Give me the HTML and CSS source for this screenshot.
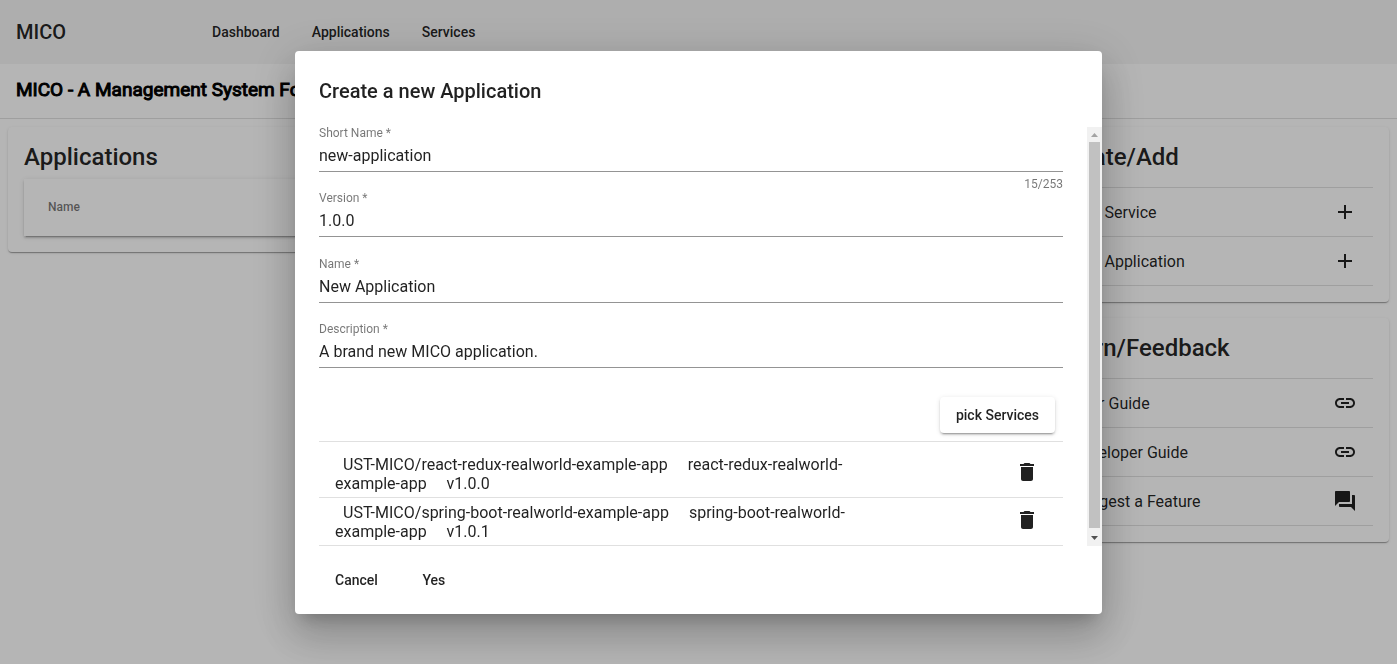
FILE: index.html
```html
<!DOCTYPE html>
<html lang="en">
<head>
  <meta charset="utf-8">
  <title>MICO</title>
  <link rel="stylesheet" href="styles.css">
</head>
<body>
  <svg class="sprite" aria-hidden="true">
    <symbol id="add" viewBox="0 0 24 24"><path d="M19 13h-6v6h-2v-6H5v-2h6V5h2v6h6v2z"/></symbol>
    <symbol id="link" viewBox="0 0 24 24"><path d="M3.900 12c0-1.710 1.390-3.100 3.100-3.100h4V7H7c-2.760 0-5 2.240-5 5s2.240 5 5 5h4v-1.900H7c-1.710 0-3.100-1.390-3.100-3.100zM8 13h8v-2H8v2zm9-6h-4v1.900h4c1.710 0 3.100 1.390 3.100 3.100s-1.390 3.100-3.100 3.100h-4V17h4c2.760 0 5-2.240 5-5s-2.240-5-5-5z"/></symbol>
    <symbol id="forum" viewBox="0 0 24 24"><path d="M21 6h-2v9H6v2c0 .55.45 1 1 1h11l4 4V7c0-.55-.45-1-1-1zm-4 6V3c0-.55-.45-1-1-1H3c-.55 0-1 .45-1 1v14l4-4h10c.55 0 1-.45 1-1z"/></symbol>
    <symbol id="delete" viewBox="0 0 24 24"><path d="M6 19c0 1.100.9 2 2 2h8c1.100 0 2-.9 2-2V7H6v12zM19 4h-3.500l-1-1h-5l-1 1H5v2h14V4z"/></symbol>
  </svg>

  <header class="toolbar">
    <span class="brand">MICO</span>
    <nav class="nav">
      <a class="nav-link" href="#dashboard">Dashboard</a>
      <a class="nav-link" href="#applications">Applications</a>
      <a class="nav-link" href="#services">Services</a>
    </nav>
  </header>
  <h1 class="page-title">MICO - A Management System For Microservice Compositions</h1>

  <main class="board">
    <section class="card">
      <h2 class="card-title">Applications</h2>
      <table class="app-table">
        <thead><tr><th>Name</th></tr></thead>
      </table>
    </section>
    <div class="side">
      <section class="card">
        <h2 class="card-title">Create/Add</h2>
        <ul class="links">
          <li><a class="link-row" href="#new-service">Add Service <svg class="icon"><use href="#add"/></svg></a></li>
          <li><a class="link-row" href="#new-application">Add Application <svg class="icon"><use href="#add"/></svg></a></li>
        </ul>
      </section>
      <section class="card">
        <h2 class="card-title">Learn/Feedback</h2>
        <ul class="links">
          <li><a class="link-row" href="#user-guide">User Guide <svg class="icon"><use href="#link"/></svg></a></li>
          <li><a class="link-row" href="#developer-guide">Developer Guide <svg class="icon"><use href="#link"/></svg></a></li>
          <li><a class="link-row" href="#feature">Suggest a Feature <svg class="icon"><use href="#forum"/></svg></a></li>
        </ul>
      </section>
    </div>
  </main>

  <div class="backdrop">
    <form class="dialog" role="dialog" aria-labelledby="dialog-title">
      <h2 class="dialog-title" id="dialog-title">Create a new Application</h2>
      <div class="dialog-body">
        <div class="dialog-content">
          <div class="fields">
            <div class="field">
              <label for="short-name">Short Name *</label>
              <input id="short-name" type="text" value="new-application" maxlength="253">
              <span class="counter">15/253</span>
            </div>
            <div class="field">
              <label for="version">Version *</label>
              <input id="version" type="text" value="1.0.0">
            </div>
            <div class="field">
              <label for="name">Name *</label>
              <input id="name" type="text" value="New Application">
            </div>
            <div class="field">
              <label for="description">Description *</label>
              <input id="description" type="text" value="A brand new MICO application.">
            </div>
          </div>
          <div class="pick-row">
            <button class="button raised" type="button">pick Services</button>
          </div>
          <ul class="services">
            <li class="service">
              <p class="service-text"><span>UST-MICO/react-redux-realworld-example-app</span> <span>react-redux-realworld-example-app</span> <span>v1.0.0</span></p>
              <button class="icon-button" type="button" aria-label="Remove"><svg class="icon"><use href="#delete"/></svg></button>
            </li>
            <li class="service">
              <p class="service-text"><span>UST-MICO/spring-boot-realworld-example-app</span> <span>spring-boot-realworld-example-app</span> <span>v1.0.1</span></p>
              <button class="icon-button" type="button" aria-label="Remove"><svg class="icon"><use href="#delete"/></svg></button>
            </li>
          </ul>
        </div>
        <div class="scrollbar" aria-hidden="true">
          <svg class="arrow arrow-up" viewBox="0 0 15 15"><path d="M4 10h7L7.500 6z"/></svg>
          <div class="thumb"></div>
          <svg class="arrow" viewBox="0 0 15 15"><path d="M4 5h7L7.500 9z"/></svg>
        </div>
      </div>
      <div class="actions">
        <button class="button" type="button">Cancel</button>
        <button class="button" type="button">Yes</button>
      </div>
    </form>
  </div>
</body>
</html>
```
FILE: styles.css
```css
* { box-sizing: border-box; }

body {
  margin: 0;
  height: 100vh;
  overflow: hidden;
  background: #fff;
  color: rgba(0, 0, 0, .87);
  font: 400 16px/19px Roboto, sans-serif;
}

h1, h2, p, ul { margin: 0; padding: 0; }
ul { list-style: none; }
a { color: inherit; text-decoration: none; }
button, input { font: inherit; color: inherit; }

.sprite { position: absolute; width: 0; height: 0; }
.icon { width: 24px; height: 24px; fill: currentColor; flex: none; display: block; }

.toolbar {
  display: flex;
  align-items: center;
  height: 64px;
  padding: 0 16px;
  background: #f5f5f5;
}
.brand { width: 180px; font-size: 20px; font-weight: 500; }
.nav { display: flex; }
.nav-link { padding: 0 16px; font-size: 14px; font-weight: 500; line-height: 36px; }

.page-title {
  padding: 14px 16px 16px;
  border-bottom: 1px solid rgba(0, 0, 0, .12);
  color: #000;
  font-size: 19px;
  font-weight: 400;
  line-height: 24px;
  white-space: nowrap;
  -webkit-text-stroke: 1px #000;
}

.board {
  display: grid;
  grid-template-columns: minmax(0, 1fr) 349px;
  align-items: start;
  gap: 16px;
  padding: 8px;
}
.side { display: grid; gap: 16px; }
.card {
  padding: 16px;
  border-radius: 4px;
  background: #fff;
  box-shadow: 0 2px 1px -1px rgba(0, 0, 0, .2), 0 1px 1px rgba(0, 0, 0, .14), 0 1px 3px rgba(0, 0, 0, .12);
}
.card-title { font-size: 24px; font-weight: 500; line-height: 28px; }

.app-table {
  width: 100%;
  margin-top: 8px;
  border-spacing: 0;
  box-shadow: 0 3px 1px -2px rgba(0, 0, 0, .2), 0 2px 2px rgba(0, 0, 0, .14), 0 1px 5px rgba(0, 0, 0, .12);
}
.app-table th {
  height: 57px;
  padding: 0 24px;
  color: rgba(0, 0, 0, .54);
  font-size: 12px;
  font-weight: 500;
  text-align: left;
}

.links { margin-top: 16px; border-top: 1px solid rgba(0, 0, 0, .12); }
.link-row {
  display: flex;
  align-items: center;
  justify-content: space-between;
  height: 49px;
  padding: 0 16px;
  border-bottom: 1px solid rgba(0, 0, 0, .12);
}

.backdrop {
  position: fixed;
  inset: 0;
  display: flex;
  align-items: center;
  justify-content: center;
  background: rgba(0, 0, 0, .29);
}
.dialog {
  display: flex;
  flex-direction: column;
  width: 807px;
  max-width: 90vw;
  padding: 24px 0 0;
  border-radius: 4px;
  background: #fff;
  box-shadow: 0 11px 15px -7px rgba(0, 0, 0, .2), 0 24px 38px 3px rgba(0, 0, 0, .14), 0 9px 46px 8px rgba(0, 0, 0, .12);
}
.dialog-title {
  margin: 0 24px 20px;
  font-size: 20px;
  font-weight: 500;
  line-height: 32px;
}
.dialog-body {
  display: flex;
  max-height: calc(100vh - 245px);
}
.dialog-content {
  flex: 1;
  padding: 0 24px;
  overflow-y: auto;
  scrollbar-width: none;
}

.scrollbar {
  display: flex;
  flex-direction: column;
  width: 15px;
  background: #f1f1f1;
}
.arrow { display: block; height: 15px; flex: none; fill: #505050; }
.arrow-up { fill: #a3a3a3; }
.thumb { flex: 1; margin: 0 2px 3px; background: #c1c1c1; }

.fields { display: grid; grid-auto-rows: 1fr; min-height: 262px; }
.field { position: relative; }
.field label {
  display: block;
  color: rgba(0, 0, 0, .54);
  font-size: 12px;
  line-height: 12px;
}
.field input {
  display: block;
  width: 100%;
  height: 33px;
  padding: 1px 0 0;
  border: 0;
  border-bottom: 1px solid rgba(0, 0, 0, .42);
  outline: 0;
  background: none;
}
.counter {
  display: block;
  padding-top: 4px;
  color: rgba(0, 0, 0, .54);
  font-size: 12px;
  line-height: 16px;
  text-align: right;
}

.button {
  min-width: 64px;
  height: 36px;
  padding: 0 16px;
  border: 0;
  border-radius: 4px;
  background: #fff;
  font-size: 14px;
  font-weight: 500;
  line-height: 36px;
}
.raised { box-shadow: 0 3px 1px -2px rgba(0, 0, 0, .2), 0 2px 2px rgba(0, 0, 0, .14), 0 1px 5px rgba(0, 0, 0, .12); }
.pick-row { display: flex; justify-content: flex-end; padding: 8px; }

.services { padding-top: 8px; border-top: 1px solid rgba(0, 0, 0, .12); }
.service {
  display: flex;
  align-items: flex-start;
  justify-content: space-between;
  height: 48px;
  padding: 2px 16px 0;
  border-bottom: 1px solid rgba(0, 0, 0, .12);
}
.service-text { max-width: 560px; padding-top: 3px; }
.service-text span { margin: 0 8px; }
.icon-button { padding: 8px; border: 0; background: none; }

.actions { display: flex; gap: 8px; padding: 16px 24px; }
```
